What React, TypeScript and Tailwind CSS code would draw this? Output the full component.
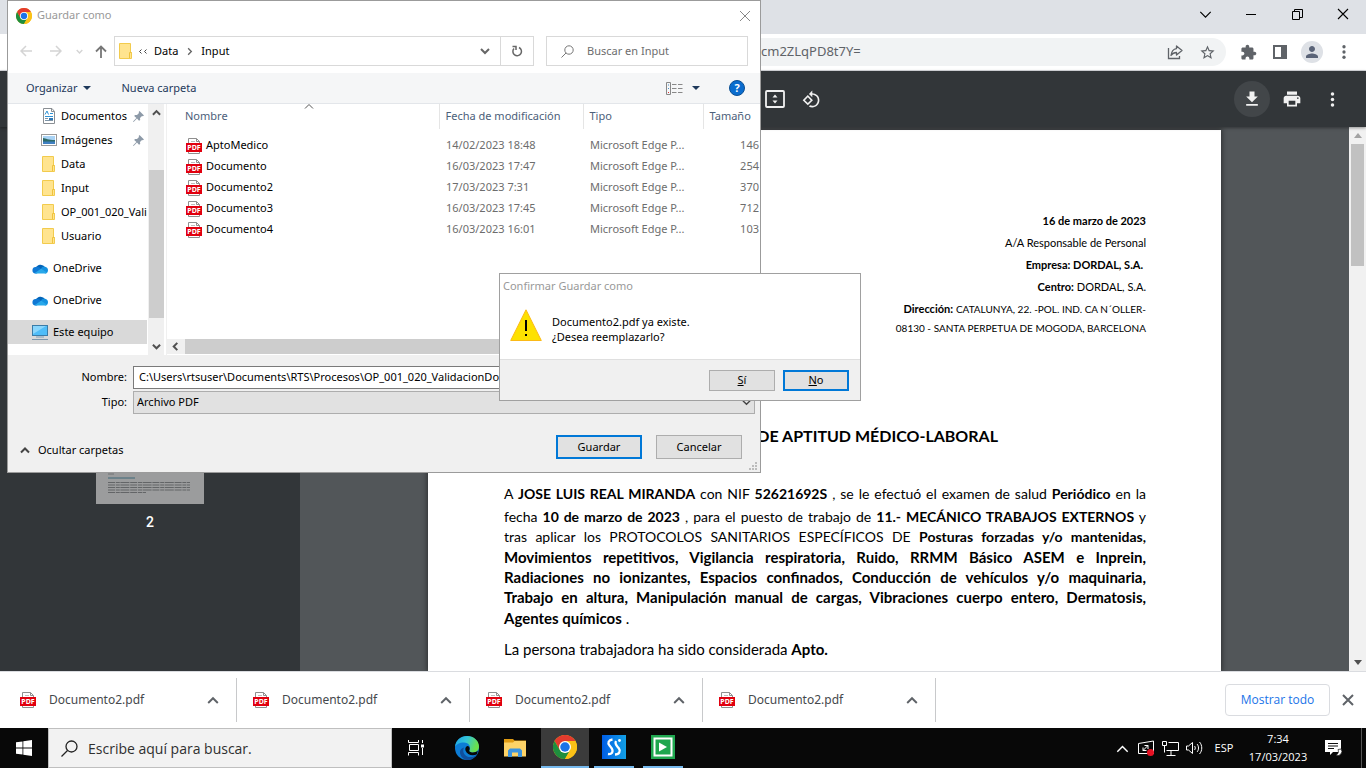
import type { ReactNode } from 'react';

const files = [
  ['AptoMedico', '14/02/2023 18:48', '146'],
  ['Documento', '16/03/2023 17:47', '254'],
  ['Documento2', '17/03/2023 7:31', '370'],
  ['Documento3', '16/03/2023 17:45', '712'],
  ['Documento4', '16/03/2023 16:01', '103'],
];

type ChevronProps = { dir: 'up' | 'down' | 'left' | 'right'; size?: number; width?: number; className?: string };

function Chevron({ dir, size = 10, width = 1.5, className = '' }: ChevronProps) {
  const d = { up: 'M1 7.5 5 3.5 9 7.5', down: 'M1 3 5 7 9 3', left: 'M7 1 3 5 7 9', right: 'M3.5 1.5 7 5 3.5 8.5' }[dir];
  return (
    <svg viewBox="0 0 10 10" width={size} height={size} className={`shrink-0 ${className}`} fill="none" stroke="currentColor" strokeWidth={width} aria-hidden="true">
      <path d={d} />
    </svg>
  );
}

function Glyph({ d, size = 20, className = '' }: { d: string; size?: number; className?: string }) {
  return (
    <svg viewBox="0 0 24 24" width={size} height={size} className={`shrink-0 ${className}`} fill="currentColor" aria-hidden="true">
      <path d={d} />
    </svg>
  );
}

function Cross({ size = 12, width = 1.2 }: { size?: number; width?: number }) {
  return (
    <svg viewBox="0 0 12 12" width={size} height={size} fill="none" stroke="currentColor" strokeWidth={width} aria-hidden="true">
      <path d="M1 1 11 11M11 1 1 11" />
    </svg>
  );
}

function PdfIcon() {
  return (
    <svg viewBox="0 0 16 16" width="16" height="16" className="shrink-0" aria-hidden="true">
      <path d="M2.500 15.500V.5h8l3 3v12z" fill="#fff" stroke="#8f8f8f" />
      <path d="M10.500.5v3h3" fill="none" stroke="#8f8f8f" />
      <path d="M5 3.500h4" stroke="#bdbdbd" />
      <rect x="0" y="5" width="16" height="9" fill="#e1000f" />
      <text x="8" y="12" textAnchor="middle" fontFamily="'Noto Sans', sans-serif" fontWeight="700" fontSize="7" fill="#fff">PDF</text>
    </svg>
  );
}

function FolderIcon() {
  return (
    <svg viewBox="0 0 14 16" width="14" height="16" className="shrink-0" aria-hidden="true">
      <path d="M.5.5h11v9h1v6H.5z" fill="#ffe48f" stroke="#f2cb4d" />
      <path d="M10.500 15V9.500h2" fill="none" stroke="#efc23c" />
    </svg>
  );
}

function DocumentsIcon() {
  return (
    <svg viewBox="0 0 12 16" width="12" height="16" className="shrink-0" aria-hidden="true">
      <path d="M.5.5h8.500l2.500 3v12H.5z" fill="#fff" stroke="#8a8f94" />
      <path d="M8.500.5v3h3" fill="none" stroke="#8a8f94" />
      <path d="M2 6.500 4 3l1.500 3.500M7 5.500h3M2 8.500h8" stroke="#2f93d6" fill="none" />
      <path d="M2 10.500h3M2 12.500h8" stroke="#7d93a6" />
      <path d="M6 10h4v2H6z" fill="#2f77b5" />
    </svg>
  );
}

function PicturesIcon() {
  return (
    <svg viewBox="0 0 16 12" width="16" height="12" className="shrink-0" aria-hidden="true">
      <rect x=".5" y=".5" width="15" height="11" fill="#fff" stroke="#9a9a9a" />
      <rect x="2" y="2" width="12" height="8" fill="#a9d3f5" />
      <path d="M2 4c3 .5 5 2 12 2v2H2z" fill="#2d6a66" />
      <path d="M2 7.500h12V10H2z" fill="#3f7fc1" />
    </svg>
  );
}

function CloudIcon() {
  return (
    <svg viewBox="0 0 16 11" width="16" height="11" className="shrink-0" aria-hidden="true">
      <path d="M4 4.500A5 4.500 0 0 1 12.500 3.500L9 7z" fill="#0364b8" />
      <path d="M3.500 10.500A3.300 3.300 0 0 1 4 3.900C6 3.500 7.500 4.500 9 6L5 10.500z" fill="#0f78d4" />
      <path d="M9 5.500C10 3.500 12 3 13 3.800c2 .2 3 1.700 3 3.400 0 2-1.200 3.300-3 3.300z" fill="#1490df" />
      <path d="M2.500 10.300 9 5.800l6 3.600c-.5.800-1.400 1.200-2.400 1.200H3.500z" fill="#28a8ea" />
    </svg>
  );
}

function ComputerIcon() {
  return (
    <svg viewBox="0 0 16 15" width="16" height="15" className="shrink-0" aria-hidden="true">
      <rect x=".5" y=".5" width="15" height="10" fill="#4fbdf8" stroke="#3a7ca8" />
      <path d="M1 1h13L1 9z" fill="#8ad6fc" />
      <path d="M4 12h8" stroke="#7fa0b8" />
      <path d="M0 14.500h16" stroke="#7c97ac" />
    </svg>
  );
}

function PinIcon() {
  return (
    <svg viewBox="0 0 11 11" width="11" height="11" className="shrink-0" fill="#8d9aa8" aria-hidden="true">
      <path d="M6.500 0 11 4.500l-1.200.8-.8-.3-2 2 .2 2-1.200.8L4 7.600.6 11 0 10.400 3.400 7 1.200 4.900 2 4l2 .1 2-2-.3-1z" />
    </svg>
  );
}

function ChromeLogo({ size }: { size: number }) {
  return (
    <svg viewBox="0 0 48 48" width={size} height={size} className="shrink-0" aria-hidden="true">
      <circle cx="24" cy="24" r="24" fill="#fbc116" />
      <path d="M24 12H44.800A24 24 0 0 0 3.200 12L13.600 30z" fill="#e33b2e" />
      <path d="M3.200 12A24 24 0 0 0 24 48L34.400 30 24 36 13.600 30z" fill="#1e8e3e" />
      <path d="M24 12H44.800A24 24 0 0 1 24 48L34.400 30z" fill="#fbc116" />
      <circle cx="24" cy="24" r="12" fill="#fff" />
      <circle cx="24" cy="24" r="9.500" fill="#1a73e8" />
    </svg>
  );
}

function EdgeLogo() {
  return (
    <svg viewBox="0 0 24 24" width="24" height="24" aria-hidden="true">
      <defs>
        <linearGradient id="edgeTop" x1="0" y1="0" x2="1" y2=".3">
          <stop offset="0" stopColor="#1ba3e8" />
          <stop offset=".5" stopColor="#34c5d8" />
          <stop offset="1" stopColor="#6be04a" />
        </linearGradient>
      </defs>
      <circle cx="12" cy="12" r="12" fill="#0c7cd5" />
      <path d="M0 11C.5 4.500 5.600 0 12 0c7 0 12 5 12 10.500 0 4-3 6-6.200 6-2.300 0-4.300-1-3.300-2.500 1.800-3-.5-7.500-5.500-7.500C4.500 6.500 1 8.500 0 11z" fill="url(#edgeTop)" />
      <path d="M9 11.500c-2.500 5 1.500 10.500 8 9.500 2-.3 4-1.500 5-2.800-2 3.500-5.500 5.800-10 5.800-4-.5-7-4-7-8 0-2 1.500-4 4-4.500z" fill="#0f4f9e" />
      <path d="M22 18.200c-4 2.500-10 .8-11.500-3.700-.6-2 .2-4 1.700-4.500 2 0 3 2 2.300 4-1 1.500 1 2.500 3.300 2.500 1.800 0 3.800-.6 5-1.700z" fill="#080808" />
    </svg>
  );
}

function SideItem({ icon, label, pinned, indent, active }: { icon: ReactNode; label: string; pinned?: boolean; indent?: boolean; active?: boolean }) {
  return (
    <li className={`flex h-6 items-center ${indent ? 'pl-[33px]' : 'pl-6'} ${active ? 'bg-[#d9d9d9]' : ''}`}>
      <span className={`flex w-4 shrink-0 ${indent ? 'mr-1 justify-center' : 'mr-[5px]'}`}>{icon}</span>
      <span className="whitespace-nowrap">{label}</span>
      {pinned && <span className="ml-auto pr-[3px]"><PinIcon /></span>}
    </li>
  );
}

function Dots({ size }: { size: number }) {
  return (
    <svg viewBox="0 0 24 24" width={size} height={size} fill="currentColor" aria-hidden="true">
      <circle cx="12" cy="5" r="2.200" /><circle cx="12" cy="12" r="2.200" /><circle cx="12" cy="19" r="2.200" />
    </svg>
  );
}

function BrowserBars() {
  return (
    <header className="shrink-0">
      <div className="flex h-[34px] items-start justify-end bg-[#dee1e6] text-black">
        <button aria-label="Buscar pestañas" className="flex h-7 w-[46px] items-center justify-center"><Chevron dir="down" size={13} width={0.9} /></button>
        <button aria-label="Minimizar" className="flex h-7 w-[46px] items-center justify-center"><span className="h-px w-[10px] bg-black" /></button>
        <button aria-label="Restaurar" className="flex h-7 w-[46px] items-center justify-center">
          <svg viewBox="0 0 11 11" width="11" height="11" fill="none" stroke="currentColor" aria-hidden="true"><path d="M.5 2.500h7v8h-7zM2.500 2.500V.5h8v8h-3" /></svg>
        </button>
        <button aria-label="Cerrar" className="flex h-7 w-[46px] items-center justify-center"><Cross size={12} width={1.1} /></button>
      </div>
      <div className="flex h-[37px] items-center border-b border-[#dadce0] bg-white pr-1.5 text-[#5f6368]">
        <div className="ml-28 flex h-7 min-w-0 flex-1 items-center rounded-full bg-[#f1f3f4] pr-[3px]">
          <input aria-label="Dirección" defaultValue="cm2ZLqPD8t7Y=" className="min-w-0 flex-1 bg-transparent pl-[649px] font-['Noto_Sans',sans-serif] text-[13px] outline-none" />
          <button aria-label="Compartir" className="flex w-8 justify-center">
            <svg viewBox="0 0 16 16" width="16" height="16" fill="none" stroke="currentColor" strokeWidth="1.300" aria-hidden="true">
              <path d="M1.500 4v10.500h11V12" />
              <path d="M9.500 2 15 6.500 9.500 11V8.500C7 8.500 5.500 9.300 4 11.500 4.500 7.500 6.500 5 9.500 4.600z" strokeLinejoin="round" />
            </svg>
          </button>
          <button aria-label="Añadir a marcadores" className="flex w-8 justify-center">
            <Glyph size={17} d="M22 9.240l-7.190-.62L12 2 9.190 8.630 2 9.240l5.460 4.730L5.820 21 12 17.270 18.180 21l-1.630-7.030L22 9.240zM12 15.400l-3.760 2.270 1-4.280-3.320-2.880 4.380-.38L12 6.100l1.710 4.040 4.380.38-3.320 2.880 1 4.280L12 15.400z" />
          </button>
        </div>
        <button aria-label="Extensiones" className="ml-1.5 flex w-8 justify-center">
          <Glyph size={17} d="M20.500 11H19V7c0-1.100-.9-2-2-2h-4V3.500C13 2.120 11.880 1 10.500 1S8 2.120 8 3.500V5H4c-1.100 0-1.990.9-1.990 2v3.800H3.500c1.490 0 2.700 1.210 2.700 2.700s-1.210 2.700-2.700 2.700H2V20c0 1.100.9 2 2 2h3.800v-1.500c0-1.490 1.210-2.700 2.700-2.700 1.490 0 2.700 1.210 2.700 2.700V22H17c1.100 0 2-.9 2-2v-4h1.500c1.380 0 2.500-1.120 2.500-2.500S21.880 11 20.500 11z" />
        </button>
        <button aria-label="Panel lateral" className="flex w-8 justify-center">
          <svg viewBox="0 0 14 14" width="14" height="14" aria-hidden="true"><path d="M1 1h12v12H1z" fill="none" stroke="currentColor" strokeWidth="2" /><path d="M8 1h5v12H8z" fill="currentColor" /></svg>
        </button>
        <button aria-label="Perfil" className="flex w-8 justify-center">
          <span className="flex size-[22px] items-center justify-center rounded-full bg-[#dee1e6] text-[#5a6377]">
            <Glyph size={18} d="M12 12c2.210 0 4-1.790 4-4s-1.790-4-4-4-4 1.790-4 4 1.790 4 4 4zm0 2c-2.670 0-8 1.340-8 4v2h16v-2c0-2.660-5.330-4-8-4z" />
          </span>
        </button>
        <button aria-label="Menú" className="flex w-8 justify-center"><Dots size={18} /></button>
      </div>
    </header>
  );
}

function PdfToolbar() {
  return (
    <div className="relative z-10 flex h-14 shrink-0 items-center bg-[#323639] pr-4 text-[#f1f1f1] shadow-[0_1px_3px_rgba(0,0,0,0.4)]">
      <div className="flex flex-1 pl-[757px]">
        <button aria-label="Ajustar a la página" className="flex w-9 justify-center">
          <svg viewBox="0 0 20 18" width="20" height="18" aria-hidden="true">
            <rect x="1" y="1" width="18" height="16" rx="1" fill="none" stroke="currentColor" strokeWidth="1.800" />
            <path d="M10 4.500 12.500 7.500h-5zM10 13.500l2.500-3h-5z" fill="currentColor" />
          </svg>
        </button>
        <button aria-label="Girar a la izquierda" className="flex w-9 justify-center">
          <Glyph size={19} d="M7.340 6.410L.86 12.900l6.490 6.480 6.490-6.480-6.500-6.490zM3.690 12.900l3.660-3.660L11 12.900l-3.660 3.660-3.650-3.660zm15.670-6.260C17.610 4.880 15.300 4 13 4V.76L8.760 5 13 9.240V6c1.790 0 3.580.68 4.950 2.050 2.730 2.730 2.730 7.170 0 9.900C16.580 19.320 14.790 20 13 20c-.97 0-1.940-.21-2.840-.61l-1.490 1.490C10.020 21.620 11.510 22 13 22c2.300 0 4.610-.88 6.360-2.640 3.520-3.510 3.520-9.210 0-12.720z" />
        </button>
      </div>
      <div className="flex items-center gap-1">
        <button aria-label="Descargar" className="flex size-9 items-center justify-center rounded-full bg-[#424649]"><Glyph size={20} d="M19 9h-4V3H9v6H5l7 7 7-7zM5 18v2h14v-2H5z" /></button>
        <button aria-label="Imprimir" className="flex size-9 items-center justify-center"><Glyph size={20} d="M19 8H5c-1.660 0-3 1.340-3 3v6h4v4h12v-4h4v-6c0-1.660-1.340-3-3-3zm-3 11H8v-5h8v5zm3-7c-.55 0-1-.45-1-1s.45-1 1-1 1 .45 1 1-.45 1-1 1zm-1-9H6v4h12V3z" /></button>
        <button aria-label="Más acciones" className="flex size-9 items-center justify-center"><Dots size={19} /></button>
      </div>
    </div>
  );
}

const line = 'block whitespace-nowrap leading-5 [text-align-last:justify]';

function PdfPage() {
  return (
    <article className="mt-[3px] w-[793px] shrink-0 bg-white pl-[76px] pr-[75px] pt-20 font-['Lato',sans-serif] text-black shadow-[0_0_5px_1px_rgba(0,0,0,0.45)]">
      <div className="text-right text-[11px] leading-[22px]">
        <p className="font-bold">16 de marzo de 2023</p>
        <p>A/A Responsable de Personal</p>
        <p className="pr-[3px] font-bold">Empresa: DORDAL, S.A.</p>
        <p><b>Centro:</b> DORDAL, S.A.</p>
        <p><b>Dirección:</b> <span className="text-[10px]">CATALUNYA, 22. -POL. IND. CA N´OLLER-</span></p>
        <p className="text-[10px] leading-4">08130 - SANTA PERPETUA DE MOGODA, BARCELONA</p>
      </div>
      <h1 className="mt-[88px] pr-[148px] text-right text-[16px] font-bold leading-6">DE APTITUD MÉDICO-LABORAL</h1>
      <p className="mt-9 text-[14px]">
        <span className={line}>A <b>JOSE LUIS REAL MIRANDA</b> con NIF <b>52621692S</b> , se le efectuó el examen de salud <b>Periódico</b> en la</span>
        <span className={`${line} mt-[3px]`}>fecha <b>10 de marzo de 2023</b> , para el puesto de trabajo de <b>11.- MECÁNICO TRABAJOS EXTERNOS</b> y</span>
        <span className={line}>tras aplicar los PROTOCOLOS SANITARIOS ESPECÍFICOS DE <b>Posturas forzadas y/o mantenidas,</b></span>
      </p>
      <p className="text-[15px]">
        <span className={line}><b>Movimientos repetitivos, Vigilancia respiratoria, Ruido, RRMM Básico ASEM e Inprein,</b></span>
        <span className={line}><b>Radiaciones no ionizantes, Espacios confinados, Conducción de vehículos y/o maquinaria,</b></span>
        <span className={line}><b>Trabajo en altura, Manipulación manual de cargas, Vibraciones cuerpo entero, Dermatosis,</b></span>
        <span className="mt-px block leading-5"><b>Agentes químicos</b> .</span>
      </p>
      <p className="mt-[11px] text-[15px] leading-5">La persona trabajadora ha sido considerada <b>Apto.</b></p>
    </article>
  );
}

function PdfViewer() {
  return (
    <main className="flex min-h-0 flex-1 overflow-hidden bg-[#525659]">
      <aside className="flex w-[300px] shrink-0 flex-col items-center bg-[#323639] pt-56">
        <div className="flex h-[153px] w-[108px] flex-col justify-end bg-[#9b9c9d] px-3 pb-[10px]">
          <svg viewBox="0 0 84 24" width="84" height="24" aria-hidden="true">
            <path d="M0 1.500h82M0 4h6" stroke="#707375" />
            <path d="M0 8h27" stroke="#3f6878" />
            <path d="M0 12.500h82M0 15h82M0 17.500h82M0 20h82M0 22.500h38" stroke="#636567" strokeDasharray="7 .8 4 .6 9 .8" />
          </svg>
        </div>
        <p className="mt-2 font-['Roboto',sans-serif] text-[14px] font-medium leading-5 text-white">2</p>
      </aside>
      <div className="flex min-w-0 flex-1 justify-center overflow-hidden"><PdfPage /></div>
      <div className="flex w-[17px] shrink-0 flex-col items-center bg-[#f1f1f1] py-1.5">
        <svg viewBox="0 0 8 5" width="8" height="5" aria-hidden="true"><path d="M0 5 4 0 8 5z" fill="#a3a3a3" /></svg>
        <div className="mt-1.5 h-[122px] w-[13px] bg-[#c1c1c1]" />
        <svg viewBox="0 0 8 5" width="8" height="5" className="mt-auto" aria-hidden="true"><path d="M0 0 4 5 8 0z" fill="#505050" /></svg>
      </div>
    </main>
  );
}

function DownloadShelf() {
  return (
    <section aria-label="Descargas" className="flex h-[57px] shrink-0 items-center border-t border-[#dadce0] bg-white">
      {[0, 1, 2, 3].map((n) => (
        <div key={n} className="flex h-11 w-[233px] items-center border-r border-[#c8c9cb] pl-4 pr-[17px] first:w-[237px] first:pl-5">
          <PdfIcon />
          <span className="ml-[13px] font-['Noto_Sans',sans-serif] text-[12px] text-[#45484c]">Documento2.pdf</span>
          <button aria-label="Opciones de Documento2.pdf" className="ml-auto text-[#5f6368]"><Chevron dir="up" size={12} width={1.6} /></button>
        </div>
      ))}
      <button className="ml-auto h-8 w-[105px] rounded border border-[#dadce0] text-[12px] font-medium text-[#1a73e8]">Mostrar todo</button>
      <button aria-label="Cerrar barra de descargas" className="ml-3 mr-3 text-[#5f6368]"><Cross size={12} width={2} /></button>
    </section>
  );
}

function Taskbar() {
  const app = 'flex h-full items-center justify-center';
  return (
    <footer className="flex h-10 shrink-0 items-center bg-[#080808] text-white">
      <button aria-label="Inicio" className={`${app} w-12`}>
        <svg viewBox="0 0 16 16" width="16" height="16" fill="#fff" aria-hidden="true"><path d="M0 2.300 6.500 1.400v6.200H0zM7.300 1.300 16 0v7.600H7.300zM0 8.400h6.500v6.200L0 13.700zM7.300 8.400H16V16l-8.700-1.200z" /></svg>
      </button>
      <label className="flex h-10 w-[344px] items-center border border-[#bfbfbf] bg-[#f2f2f2] pl-3 text-[#2f2f2f]">
        <svg viewBox="0 0 17 17" width="17" height="17" fill="none" stroke="#222" strokeWidth="1.300" className="shrink-0" aria-hidden="true"><circle cx="10.500" cy="6.500" r="5.500" /><path d="M6.500 10.500.5 16.500" /></svg>
        <input aria-label="Buscar" placeholder="Escribe aquí para buscar." className="ml-[10px] min-w-0 flex-1 bg-transparent text-[14px] outline-none placeholder:text-[#2f2f2f]" />
      </label>
      <button aria-label="Vista de tareas" className={`${app} w-12`}>
        <svg viewBox="0 0 17 16" width="17" height="16" fill="none" stroke="#fff" aria-hidden="true"><path d="M.5 0v2.500h10V0M1.500 4.500h9v6h-9zM.5 15.500V12.500h10v3M14.500 0v3M14.500 8v7" /><path d="M13 4.500h3v3h-3z" fill="#fff" stroke="none" /></svg>
      </button>
      <button aria-label="Microsoft Edge" className={`${app} ml-[3px] w-12`}><EdgeLogo /></button>
      <button aria-label="Explorador de archivos" className={`${app} w-12`}>
        <svg viewBox="0 0 22 18" width="22" height="18" aria-hidden="true"><path d="M0 0h9l1.500 1.500H22V5H0z" fill="#e09b12" /><path d="M0 3.500h9L10.500 2H22v15.500H0z" fill="#fdd367" /><path d="M4 18V11.500L6 9.500h10l2 2V18h-4v-4.500H8V18z" fill="#3d94de" /></svg>
      </button>
      <button aria-label="Google Chrome" className={`${app} ml-0.5 w-12 border-b-2 border-[#76b9ed] bg-[#3b3b3b]`}><ChromeLogo size={24} /></button>
      <button aria-label="Automatización" className={`${app} ml-[5px] w-10 border-b-2 border-[#76b9ed]`}>
        <svg viewBox="0 0 24 24" width="24" height="24" aria-hidden="true">
          <defs><linearGradient id="sBlue"><stop offset="0" stopColor="#005de5" /><stop offset="1" stopColor="#12a0e6" /></linearGradient></defs>
          <path d="M0 0h24v24H0z" fill="url(#sBlue)" />
          <path d="M10.500 4.500C6.500 5 5.300 8 7.500 10.500S11.800 15 10 17.800c-.9 1.200-2.300 1.500-4 1.200M13 19.500c4.300 0 6-3.500 3.800-6.200S12.300 9 14 6" fill="none" stroke="#fff" strokeWidth="2.300" />
          <circle cx="17.500" cy="5.500" r="1.400" fill="#fff" />
        </svg>
      </button>
      <button aria-label="Ejecutor" className={`${app} ml-[9px] w-10 border-b-2 border-[#76b9ed]`}>
        <svg viewBox="0 0 24 24" width="24" height="24" aria-hidden="true"><path d="M0 0h24v24H0z" fill="#20a850" /><path d="M3.500 3.500h17v17h-17z" fill="#1fa64e" stroke="#fff" strokeWidth="2" /><path d="M8 7.500v9l8-4.500z" fill="#fff" /></svg>
      </button>
      <div className="ml-auto flex h-full items-center">
        <button aria-label="Mostrar iconos ocultos" className={`${app} w-6`}><Chevron dir="up" size={13} width={1.1} /></button>
        <span className={`${app} w-6`}>
          <svg viewBox="0 0 17 16" width="17" height="16" fill="none" stroke="#fff" aria-hidden="true">
            <path d="M.5 13.500v-10L15.500 1v12.500zM5 10.500l5-5M6.500 5.500h3.500V9M5 7.500v3h3.500" /><circle cx="12.500" cy="12.500" r="3.500" fill="#e81123" stroke="none" />
          </svg>
        </span>
        <span className={`${app} w-6`}>
          <svg viewBox="0 0 17 15" width="17" height="15" fill="none" stroke="#fff" aria-hidden="true"><path d="M6.500 1.500h10v8h-12M4.500 14.500h9M9 10v4M.5.500h4v4h-4zM2.500 5v6.500" /></svg>
        </span>
        <span className={`${app} w-6`}>
          <svg viewBox="0 0 17 14" width="17" height="14" fill="none" stroke="#fff" aria-hidden="true"><path d="M.5 5v4h2l4 3.500v-11L2.500 5zM8.500 5c1 1 1 3 0 4M11 3c2 2 2 6 0 8M13.500 1c3 3.300 3 8.700 0 12" /></svg>
        </span>
        <span className="w-9 text-center text-[11px]">ESP</span>
        <div className="w-[72px] text-center text-[11px] leading-[18px]"><p>7:34</p><p>17/03/2023</p></div>
        <button aria-label="Notificaciones" className={`${app} w-[38px]`}>
          <svg viewBox="0 0 17 16" width="17" height="16" aria-hidden="true"><path d="M0 0h16v12H8l-3 3v-3H0z" fill="#fff" /><path d="M3 3.500h10M3 6h10M3 8.500h6" stroke="#111" /><path d="M16 9a4 4 0 0 1-5 6 4 4 0 0 0 2-5.500z" fill="#fff" stroke="#111" strokeWidth=".7" /></svg>
        </button>
        <span className="ml-[9px] h-full border-l border-[#555] pl-1" />
      </div>
    </footer>
  );
}

const plainButton = 'border border-[#adadad] bg-[#e1e1e1]';
const focusButton = 'border-2 border-[#0078d7] bg-[#e1e1e1]';

function SaveDialog() {
  return (
    <section role="dialog" aria-label="Guardar como" className="absolute left-[7px] top-0 z-20 flex h-[473px] w-[754px] flex-col border border-[#9b9b9b] bg-white font-['Noto_Sans',sans-serif] text-[11px]">
      <div className="flex h-[29px] shrink-0 items-center pl-2 pr-[9px]">
        <ChromeLogo size={16} />
        <h2 className="ml-[5px] text-[#999]">Guardar como</h2>
        <button aria-label="Cerrar" className="ml-auto text-[#888]"><Cross size={12} width={1} /></button>
      </div>
      <div className="mt-[6px] flex h-[30px] shrink-0 items-center pr-3">
        <nav className="flex items-center">
          {['M12 6H1M6 1 1 6l5 5', 'M0 6h11M6 1l5 5-5 5'].map((d, n) => (
            <button key={d} aria-label={n ? 'Adelante' : 'Atrás'} className="ml-3 mr-1.5 text-[#d4d4d4]">
              <svg viewBox="0 0 12 12" width="12" height="12" fill="none" stroke="currentColor" strokeWidth="1.500" aria-hidden="true"><path d={d} /></svg>
            </button>
          ))}
          <button aria-label="Ubicaciones recientes" className="ml-2 text-[#d4d4d4]"><Chevron dir="down" size={7} width={2} /></button>
          <button aria-label="Subir" className="ml-3 text-[#777]">
            <svg viewBox="0 0 12 13" width="12" height="13" fill="none" stroke="currentColor" strokeWidth="1.800" aria-hidden="true"><path d="M6 13V1.500M1 6.500l5-5 5 5" /></svg>
          </button>
        </nav>
        <div className="ml-[7px] flex h-[30px] flex-1 items-center border border-[#d9d9d9] pl-1">
          <FolderIcon />
          <span className="ml-[5px] flex text-[#444]"><Chevron dir="left" size={5} width={2} /><Chevron dir="left" size={5} width={2} /></span>
          <span className="ml-1.5">Data</span>
          <Chevron dir="right" size={9} className="mx-[7px] text-[#666]" />
          <span>Input</span>
          <button aria-label="Ubicaciones anteriores" className="ml-auto mr-[10px] text-[#666]"><Chevron dir="down" size={10} width={2} /></button>
          <button aria-label="Actualizar" className="flex h-full w-[33px] items-center justify-center border-l border-[#d9d9d9] text-[#666]">
            <svg viewBox="0 0 12 12" width="12" height="12" fill="none" stroke="currentColor" strokeWidth="1.500" aria-hidden="true"><path d="M8 2.500A4.300 4.300 0 1 1 3 3.500M1.500 1.500H5V5" /></svg>
          </button>
        </div>
        <label className="ml-3 flex h-[30px] w-[202px] items-center border border-[#d9d9d9] pl-[14px]">
          <svg viewBox="0 0 13 13" width="13" height="13" fill="none" stroke="#777" className="shrink-0" aria-hidden="true"><circle cx="8" cy="5" r="4.200" /><path d="M5 8 .5 12.500" /></svg>
          <input aria-label="Buscar en Input" placeholder="Buscar en Input" className="ml-[13px] min-w-0 flex-1 outline-none placeholder:text-[#6d6d6d]" />
        </label>
      </div>
      <div className="mt-[7px] flex h-[31px] shrink-0 items-center border-b border-[#e3e6ea] bg-[#f5f6f7] pl-[18px] pr-[15px] text-[#1e395b]">
        <button className="flex items-center gap-1.5">Organizar <svg viewBox="0 0 8 4" width="8" height="4" aria-hidden="true"><path d="M0 0h8L4 4z" fill="currentColor" /></svg></button>
        <button className="ml-[30px]">Nueva carpeta</button>
        <button aria-label="Cambiar la vista" className="ml-auto flex items-center gap-[9px]">
          <svg viewBox="0 0 17 13" width="17" height="13" fill="none" stroke="#888" aria-hidden="true"><path d="M.5.5h4v12h-4zM6 2.500h4.500M12 2.500h4.500M6 6.500h4.500M12 6.500h4.500M6 10.500h4.500M12 10.500h4.500" /><path d="M2 3h1M2 6.500h1" stroke="#4a90c8" /><path d="M2 10.500h1" stroke="#d33" /></svg>
          <svg viewBox="0 0 8 4" width="8" height="4" aria-hidden="true"><path d="M0 0h8L4 4z" fill="currentColor" /></svg>
        </button>
        <button aria-label="Ayuda" className="ml-[29px] flex size-4 items-center justify-center rounded-full border border-[#0b4f93] bg-[#0a6cce] font-bold text-white">?</button>
      </div>
      <div className="flex h-[251px] shrink-0">
        <nav className="flex min-w-0">
          <ul className="w-[139px] overflow-hidden">
            <SideItem indent pinned icon={<DocumentsIcon />} label="Documentos" />
            <SideItem indent pinned icon={<PicturesIcon />} label="Imágenes" />
            <SideItem indent icon={<FolderIcon />} label="Data" />
            <SideItem indent icon={<FolderIcon />} label="Input" />
            <SideItem indent icon={<FolderIcon />} label="OP_001_020_Vali" />
            <SideItem indent icon={<FolderIcon />} label="Usuario" />
            <li className="h-2" />
            <SideItem icon={<CloudIcon />} label="OneDrive" />
            <li className="h-2" />
            <SideItem icon={<CloudIcon />} label="OneDrive" />
            <li className="h-2" />
            <SideItem active icon={<ComputerIcon />} label="Este equipo" />
          </ul>
          <div className="ml-px flex w-4 flex-col items-center bg-[#f0f0f0] py-1 text-[#505050]">
            <Chevron dir="up" size={9} width={2.200} />
            <div className="mt-[53px] h-[148px] w-[15px] bg-[#cdcdcd]" />
            <Chevron dir="down" size={9} width={2.200} className="mt-auto" />
          </div>
        </nav>
        <div className="ml-0.5 flex min-w-0 flex-1 flex-col border-l border-[#f0f0f0]">
          <div className="relative">
            <Chevron dir="up" size={10} width={1} className="absolute left-[137px] top-[-3px] text-[#555]" />
            <table className="w-full table-fixed border-collapse text-[#6d6d6d]">
              <colgroup><col className="w-[272px]" /><col className="w-36" /><col className="w-[120px]" /><col /></colgroup>
              <thead>
                <tr className="h-[25px] text-left text-[#4c607a]">
                  <th className="pl-[18px] font-normal">Nombre</th>
                  <th className="border-l border-[#e5e5e5] pl-1.5 font-normal">Fecha de modificación</th>
                  <th className="border-l border-[#e5e5e5] pl-1.5 font-normal">Tipo</th>
                  <th className="border-l border-[#e5e5e5] pl-1.5 font-normal">Tamaño</th>
                </tr>
              </thead>
              <tbody>
                <tr className="h-[6px]"><td colSpan={4} className="p-0" /></tr>
                {files.map(([name, date, size]) => (
                  <tr key={name} className="h-[21px] whitespace-nowrap">
                    <td className="pl-[19px] text-black"><span className="flex items-center gap-1"><PdfIcon />{name}</span></td>
                    <td className="pl-[7px]">{date}</td>
                    <td className="pl-[7px]">Microsoft Edge P...</td>
                    <td className="pr-px text-right">{size}</td>
                  </tr>
                ))}
              </tbody>
            </table>
          </div>
          <div className="mb-px mt-auto flex h-[15px] items-center bg-[#f0f0f0] text-[#505050]">
            <Chevron dir="left" size={9} width={2.200} className="ml-1" />
            <div className="ml-[5px] h-full w-[480px] bg-[#cdcdcd]" />
            <Chevron dir="right" size={9} width={2.200} className="ml-auto mr-1" />
          </div>
        </div>
      </div>
      <div className="flex min-h-0 flex-1 flex-col bg-[#f0f0f0] text-black">
        <div className="grid grid-cols-[119px_1fr] gap-x-[6px] gap-y-[2px] pr-[5px] pt-[11px]">
          <label htmlFor="file-name" className="self-center text-right">Nombre:</label>
          <input id="file-name" defaultValue="C:\Users\rtsuser\Documents\RTS\Procesos\OP_001_020_ValidacionDocumentos" className="h-[23px] min-w-0 border border-[#7a7a7a] bg-white px-[5px] pb-0.5 outline-none" />
          <label htmlFor="file-type" className="self-center text-right">Tipo:</label>
          <div className="relative">
            <select id="file-type" className="block h-[23px] w-full appearance-none border border-[#adadad] bg-[#e1e1e1] px-[3px] outline-none"><option>Archivo PDF</option></select>
            <Chevron dir="down" size={9} className="pointer-events-none absolute right-1 top-[7px] text-[#444]" />
          </div>
        </div>
        <div className="mt-[21px] flex items-start pl-3 pr-[18px]">
          <button className="flex items-center gap-2 pt-[7px]"><Chevron dir="up" size={10} width={2} className="text-[#444]" />Ocultar carpetas</button>
          <button className={`ml-auto h-6 w-[86px] ${focusButton}`}>Guardar</button>
          <button className={`ml-[14px] h-6 w-[86px] ${plainButton}`}>Cancelar</button>
        </div>
        <svg viewBox="0 0 8 8" width="8" height="8" fill="#bcbcbc" className="mb-0.5 ml-auto mr-[3px] mt-auto shrink-0" aria-hidden="true"><path d="M6 0h2v2H6zM6 3h2v2H6zM6 6h2v2H6zM3 3h2v2H3zM3 6h2v2H3zM0 6h2v2H0z" /></svg>
      </div>
    </section>
  );
}

function ConfirmDialog() {
  return (
    <section role="alertdialog" aria-label="Confirmar Guardar como" className="absolute left-[499px] top-[273px] z-30 flex h-32 w-[362px] flex-col border border-[#a0a0a0] bg-white font-['Noto_Sans',sans-serif] text-[11px] text-black">
      <h2 className="pl-[3px] pt-1 leading-4 text-[#999]">Confirmar Guardar como</h2>
      <div className="flex pl-[10px] pt-[15px]">
        <svg viewBox="0 0 32 32" width="32" height="32" aria-hidden="true"><path d="M16 .8 31.300 31.500H.7z" fill="#fde100" stroke="#fbb917" strokeLinejoin="round" /><path d="M15 11h2v11h-2zM15 25h2v2h-2z" fill="#000" /></svg>
        <p className="ml-[10px] pt-[5px] leading-[15px]">Documento2.pdf ya existe.<br />¿Desea reemplazarlo?</p>
      </div>
      <div className="mt-auto flex h-[41px] items-center justify-end gap-2 border-t border-[#dfdfdf] bg-[#f0f0f0] pr-[11px]">
        <button className={`flex h-[21px] w-[66px] items-center justify-center ${plainButton}`}><u>S</u>í</button>
        <button className={`flex h-[21px] w-[66px] items-center justify-center ${focusButton}`}><u>N</u>o</button>
      </div>
    </section>
  );
}

export default function App() {
  return (
    <div className="relative flex h-screen flex-col overflow-hidden bg-white font-['Open_Sans','Noto_Sans',sans-serif]">
      <BrowserBars />
      <PdfToolbar />
      <PdfViewer />
      <DownloadShelf />
      <Taskbar />
      <SaveDialog />
      <ConfirmDialog />
    </div>
  );
}
